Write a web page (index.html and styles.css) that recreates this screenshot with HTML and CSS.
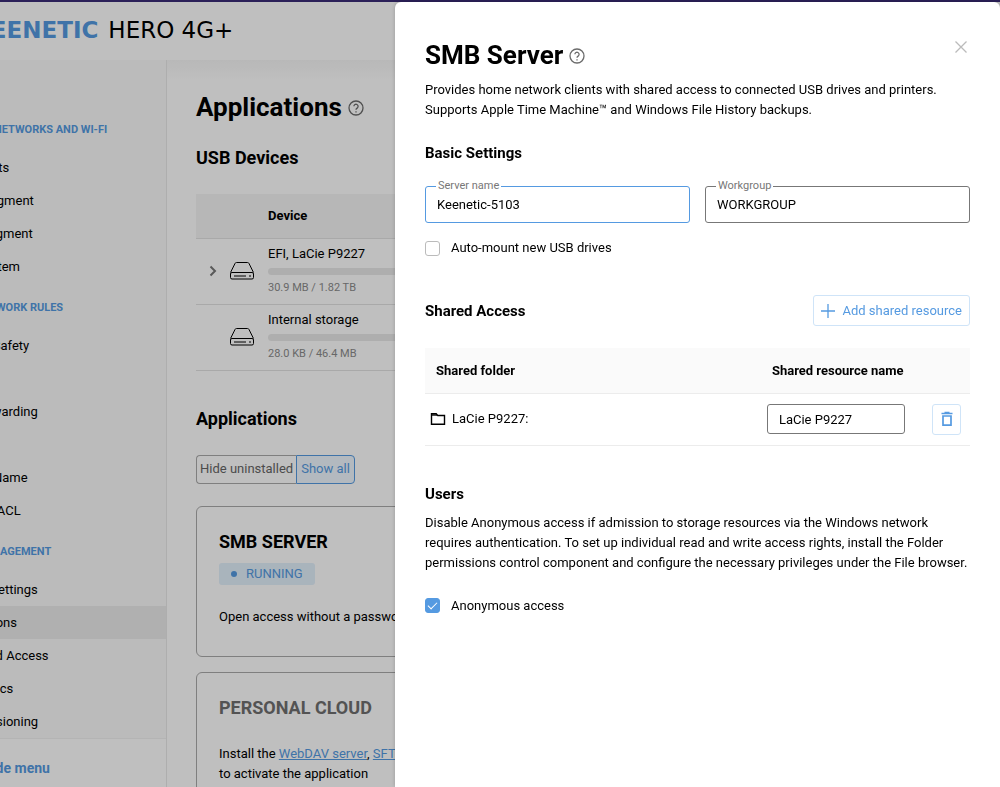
FILE: index.html
```html
<!DOCTYPE html>
<html lang="en">
<head>
  <meta charset="UTF-8">
  <title>Keenetic Hero 4G+</title>
  <link rel="stylesheet" href="styles.css">
</head>
<body>

<div class="page">
  <header class="header">
    <span class="brand">KEENETIC</span>
    <span class="model">HERO 4G+</span>
  </header>

  <div class="layout">
    <aside class="sidebar">
      <nav class="menu">
        <h4>My networks and Wi-Fi</h4>
        <a href="#">Client Lists</a>
        <a href="#">Home segment</a>
        <a href="#">Guest segment</a>
        <a href="#">Wi-Fi System</a>
        <h4>Network rules</h4>
        <a href="#">Internet Safety</a>
        <a href="#">Firewall</a>
        <a href="#">Port Forwarding</a>
        <a href="#">Routing</a>
        <a href="#">Domain Name</a>
        <a href="#">Network ACL</a>
        <h4>Management</h4>
        <a href="#">System settings</a>
        <a href="#" class="active">Applications</a>
        <a href="#">Users and Access</a>
        <a href="#">Diagnostics</a>
        <a href="#">ISP provisioning</a>
      </nav>
      <a href="#" class="hide-menu">Hide menu</a>
    </aside>

    <main class="content">
      <h1>Applications
        <svg class="help" viewBox="0 0 16 16"><circle cx="8" cy="8" r="7"/><path d="M5.9 6.3a2.1 2.1 0 1 1 3.4 1.7C8.5 8.6 8 8.9 8 9.8M8 11.2v1.2"/></svg>
      </h1>

      <h2>USB Devices</h2>
      <table class="devices">
        <thead>
          <tr><th class="col-arrow"></th><th class="col-icon"></th><th>Device</th></tr>
        </thead>
        <tbody>
          <tr>
            <td class="col-arrow"><svg class="arrow" viewBox="0 0 8 12"><path d="M1.500 1.500L6 6l-4.500 4.500"/></svg></td>
            <td class="col-icon"><svg class="drive" viewBox="0 0 26 20"><path d="M1.500 11.500L6 2.500Q6.400 1.500 7.500 1.500H18.500Q19.600 1.500 20 2.500L24.500 11.500"/><rect x="1.500" y="11.500" width="23" height="6.500" rx="1.500"/><path d="M5 15h12M20 15h2"/></svg></td>
            <td>
              <div>EFI, LaCie P9227</div>
              <div class="bar"></div>
              <div class="usage">30.9 MB / 1.82 TB</div>
            </td>
          </tr>
          <tr>
            <td class="col-arrow"></td>
            <td class="col-icon"><svg class="drive" viewBox="0 0 26 20"><path d="M1.500 11.500L6 2.500Q6.400 1.500 7.500 1.500H18.500Q19.600 1.500 20 2.500L24.500 11.500"/><rect x="1.500" y="11.500" width="23" height="6.500" rx="1.500"/><path d="M5 15h12M20 15h2"/></svg></td>
            <td>
              <div>Internal storage</div>
              <div class="bar"></div>
              <div class="usage">28.0 KB / 46.4 MB</div>
            </td>
          </tr>
        </tbody>
      </table>

      <h2>Applications</h2>
      <div class="switch">
        <button type="button">Hide uninstalled</button>
        <button type="button" class="on">Show all</button>
      </div>

      <section class="card">
        <h3>SMB SERVER</h3>
        <span class="status">RUNNING</span>
        <p>Open access without a password</p>
      </section>

      <section class="card off">
        <h3>PERSONAL CLOUD</h3>
        <p>Install the <a href="#">WebDAV server</a>, <a href="#">SFTP</a><br>to activate the application</p>
      </section>
    </main>
  </div>
</div>

<div class="overlay"></div>

<div class="panel" role="dialog" aria-labelledby="panel-title">
  <div class="panel-head">
    <h1 id="panel-title">SMB Server
      <svg class="help" viewBox="0 0 16 16"><circle cx="8" cy="8" r="7"/><path d="M5.9 6.3a2.1 2.1 0 1 1 3.4 1.7C8.5 8.6 8 8.9 8 9.8M8 11.2v1.2"/></svg>
    </h1>
    <button type="button" class="close" aria-label="Close">
      <svg viewBox="0 0 14 14"><path d="M1.500 1.500l11 11M12.500 1.500l-11 11"/></svg>
    </button>
  </div>
  <p>Provides home network clients with shared access to connected USB drives and printers.<br>Supports Apple Time Machine™ and Windows File History backups.</p>

  <h3 class="basic">Basic Settings</h3>
  <div class="fields">
    <div class="field">
      <label for="server-name">Server name</label>
      <input type="text" id="server-name" class="current" value="Keenetic-5103">
    </div>
    <div class="field">
      <label for="workgroup">Workgroup</label>
      <input type="text" id="workgroup" value="WORKGROUP">
    </div>
  </div>
  <label class="check"><input type="checkbox"> Auto-mount new USB drives</label>

  <div class="shared-head">
    <h3>Shared Access</h3>
    <button type="button" class="add">
      <svg viewBox="0 0 14 14"><path d="M7 0v14M0 7h14"/></svg>
      Add shared resource
    </button>
  </div>
  <table class="shares">
    <thead>
      <tr><th>Shared folder</th><th class="col-name">Shared resource name</th><th class="col-delete"></th></tr>
    </thead>
    <tbody>
      <tr>
        <td>
          <div class="folder">
            <svg viewBox="0 0 16 14"><path d="M1.500 12.200V1.800h4.700l1.500 1.700h6.800v8.700z"/><path d="M1.500 3h5.500"/></svg>
            LaCie P9227:
          </div>
        </td>
        <td class="col-name"><input type="text" value="LaCie P9227" aria-label="Shared resource name"></td>
        <td class="col-delete">
          <button type="button" class="delete" aria-label="Delete">
            <svg viewBox="0 0 14 16"><path d="M1.500 2.500h11M4.500 1.500h5M3 5h8v9.200H3z"/></svg>
          </button>
        </td>
      </tr>
    </tbody>
  </table>

  <h3 class="users">Users</h3>
  <p>Disable Anonymous access if admission to storage resources via the Windows network<br>requires authentication. To set up individual read and write access rights, install the Folder<br>permissions control component and configure the necessary privileges under the File browser.</p>
  <label class="check anonymous"><input type="checkbox" checked> Anonymous access</label>
</div>

</body>
</html>
```

FILE: styles.css
```css
* {
  box-sizing: border-box;
}

html {
  height: 100%;
}

body {
  height: 100%;
  margin: 0;
  overflow: hidden;
  font-family: Roboto, sans-serif;
  font-size: 13px;
  line-height: 20px;
  color: #000;
}

h1, h2, h3, h4, p {
  margin: 0;
}

h1 {
  display: flex;
  align-items: center;
  gap: 6px;
  font-size: 26px;
  line-height: 32px;
  font-weight: 700;
}

h3 {
  font-size: 15px;
}

a {
  color: #559ae1;
}

button, input {
  font: inherit;
}

svg {
  display: block;
  fill: none;
  stroke: currentColor;
}

.help {
  width: 16px;
  height: 16px;
  margin-top: 1px;
  color: #6b6b6b;
  stroke-width: 1.3;
}

/* page behind the panel */

.page {
  display: flex;
  flex-direction: column;
  height: 100%;
  margin-left: -80px;
}

.header {
  display: flex;
  flex: none;
  align-items: center;
  gap: 10px;
  height: 60px;
  padding-left: 53px;
  font-family: "DejaVu Sans", sans-serif;
  font-size: 23px;
}

.brand {
  font-weight: 700;
  color: #559ae1;
}

.layout {
  display: flex;
  flex: 1;
  min-height: 0;
}

.sidebar {
  display: flex;
  flex: none;
  flex-direction: column;
  width: 247px;
  background: #fafafa;
  border-right: 1px solid #e8e8e8;
}

.menu {
  flex: 1;
  padding-top: 45px;
  overflow: hidden;
}

.menu h4 {
  padding: 15px 0 11px 55px;
  font-size: 11px;
  line-height: 20px;
  text-transform: uppercase;
  color: #559ae1;
}

.menu a {
  display: block;
  height: 33px;
  padding-left: 25px;
  line-height: 33px;
  text-decoration: none;
  color: #000;
}

.menu .active {
  background: #ebebeb;
}

.hide-menu {
  flex: none;
  height: 49px;
  padding: 19px 0 0 62px;
  font-size: 14px;
  font-weight: 700;
  text-decoration: none;
  border-top: 1px solid #f0f0f0;
  background: #fff;
}

.content {
  flex: 1;
  padding: 31px 30px 0 29px;
  overflow: hidden;
  background: linear-gradient(#f6f6f6, #fff 20px);
}

.content h2 {
  margin: 23px 0 24px;
  font-size: 18px;
  line-height: 24px;
}

.content table {
  width: 100%;
  border-collapse: collapse;
}

.content th {
  height: 44px;
  padding: 0;
  text-align: left;
  background: #f5f5f5;
}

.content tr {
  border-bottom: 1px solid #e2e2e2;
}

.content td {
  height: 66px;
  padding: 0;
}

.content .col-arrow {
  width: 33px;
}

.content .col-icon {
  width: 39px;
}

.arrow {
  width: 8px;
  height: 12px;
  margin-left: 13px;
  color: #777;
  stroke-width: 2;
}

.drive {
  width: 26px;
  height: 20px;
}

.bar {
  height: 7px;
  margin: 4px 0 3px;
  border-radius: 4px;
  background: #e9e9e9;
}

.usage {
  font-size: 11px;
  color: #8b8b8b;
}

.content .devices + h2 {
  margin-top: 36px;
}

.switch {
  display: flex;
}

.switch button {
  height: 29px;
  padding: 0 3px;
  border: 1px solid #aaa;
  border-right: 0;
  border-radius: 4px 0 0 4px;
  background: none;
  color: #666;
}

.switch .on {
  padding: 0 4px;
  border: 1px solid #559ae1;
  border-radius: 0 4px 4px 0;
  background: #eff7ff;
  color: #559ae1;
}

.card {
  height: 151px;
  margin: 22px 0 15px;
  padding: 23px 22px;
  border: 1px solid #aaa;
  border-radius: 6px;
}

.card + .card {
  margin-top: 0;
}

.card h3 {
  font-size: 18px;
  line-height: 24px;
}

.off h3 {
  color: #6f6f6f;
}

.status {
  display: inline-flex;
  align-items: center;
  gap: 9px;
  height: 22px;
  margin: 9px 0 22px;
  padding: 0 12px;
  border-radius: 3px;
  background: #e2f0fb;
  color: #559ae1;
}

.status::before {
  content: "";
  width: 6px;
  height: 6px;
  border-radius: 50%;
  background: #559ae1;
}

.off p {
  margin-top: 24px;
}

.overlay {
  position: fixed;
  inset: 0;
  border-top: 2px solid #2b2058;
  background: rgba(0, 0, 0, 0.25);
}

/* side panel */

.panel {
  position: fixed;
  top: 2px;
  right: 0;
  bottom: 0;
  width: 60.5%;
  padding: 37px 30px 0;
  border-radius: 6px 6px 0 0;
  background: #fff;
  box-shadow: 0 0 4px rgba(0, 0, 0, 0.2);
}

.panel-head {
  display: flex;
  justify-content: space-between;
  margin-bottom: 9px;
}

.close {
  align-self: flex-start;
  padding: 1px 2px;
  border: 0;
  background: none;
  color: #bbb;
}

.close svg {
  width: 14px;
  height: 14px;
  stroke-width: 1.3;
}

.basic {
  margin: 23px 0;
}

.fields {
  display: grid;
  grid-template-columns: 1fr 1fr;
  gap: 15px;
}

.field {
  position: relative;
}

.field label {
  position: absolute;
  top: -7px;
  left: 11px;
  padding: 0 2px;
  font-size: 11px;
  line-height: 14px;
  background: #fff;
  color: #777;
}

.field input, .shares input {
  display: block;
  width: 100%;
  height: 37px;
  padding: 0 11px;
  border: 1px solid #777;
  border-radius: 3px;
  outline: none;
  background: #fff;
  color: #000;
}

.field .current {
  border-color: #559ae1;
}

.check {
  display: flex;
  align-items: center;
  gap: 11px;
  margin-top: 15px;
}

.check input {
  width: 15px;
  height: 15px;
  margin: 0;
  border: 1px solid #bbb;
  border-radius: 3px;
  appearance: none;
}

.check input:checked {
  display: flex;
  align-items: center;
  justify-content: center;
  border-color: #559ae1;
  background: #559ae1;
}

.check input:checked::after {
  content: "";
  width: 8px;
  height: 4px;
  margin-bottom: 3px;
  border: solid #fff;
  border-width: 0 0 1px 1px;
  transform: rotate(-45deg);
}

.shared-head {
  display: flex;
  align-items: center;
  justify-content: space-between;
  margin: 37px 0 22px;
}

.add {
  display: flex;
  align-items: center;
  gap: 8px;
  height: 31px;
  padding: 0 7px;
  border: 1px solid #cfe4f8;
  border-radius: 3px;
  background: #fff;
  color: #559ae1;
}

.add svg {
  width: 14px;
  height: 14px;
  stroke-width: 1.3;
}

.shares {
  width: 100%;
  border-collapse: collapse;
  table-layout: fixed;
}

.shares tr {
  border-bottom: 1px solid #ececec;
}

.shares th {
  height: 45px;
  padding: 1px 0 0 11px;
  text-align: left;
  background: #fafafa;
}

.shares td {
  height: 52px;
  padding: 0 5px;
}

.shares .col-name {
  width: 27%;
}

.shares th.col-name {
  padding-left: 9px;
}

.shares td.col-name {
  padding-left: 4px;
}

.shares .col-delete {
  width: 11%;
}

.shares input {
  height: 30px;
}

.folder {
  display: flex;
  align-items: center;
  gap: 6px;
}

.folder svg {
  width: 16px;
  height: 14px;
  stroke-width: 1.4;
}

.delete {
  display: flex;
  align-items: center;
  justify-content: center;
  width: 29px;
  height: 31px;
  margin: 0 4px 0 auto;
  padding: 0;
  border: 1px solid #cfe4f8;
  border-radius: 3px;
  background: #fff;
  color: #559ae1;
}

.delete svg {
  width: 14px;
  height: 16px;
  stroke-width: 1.7;
}

.users {
  margin: 38px 0 9px;
}

.anonymous {
  margin-top: 23px;
}
```
